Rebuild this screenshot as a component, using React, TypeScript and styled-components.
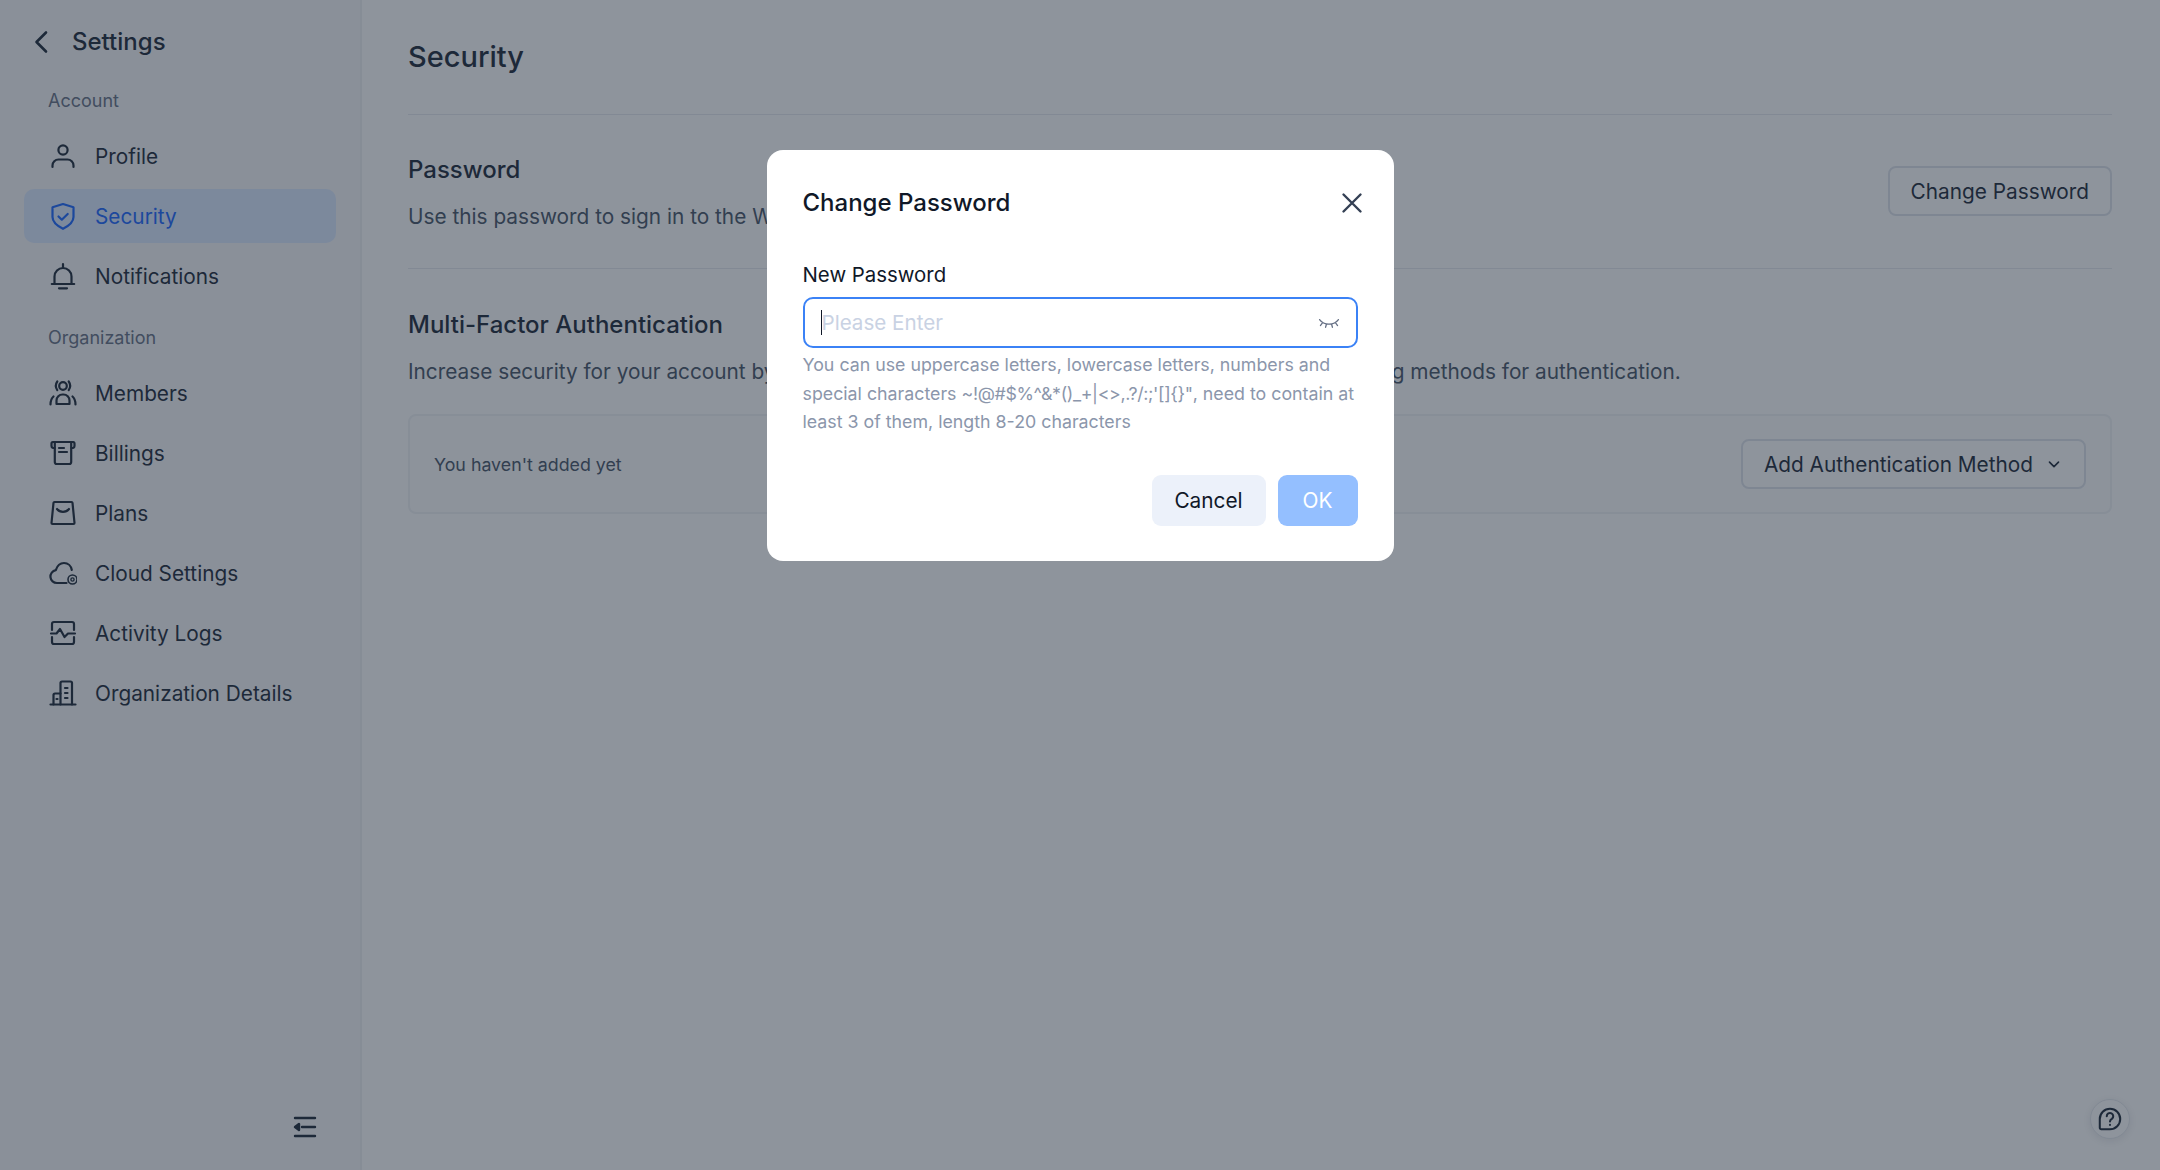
import React from "react";
import styled, { createGlobalStyle } from "styled-components";

const GlobalStyle = createGlobalStyle`
  html, body {
    margin: 0;
    padding: 0;
    height: 100%;
    background: #fff;
  }
  body {
    font-family: Inter, "Noto Sans", "Liberation Sans", sans-serif;
    color: #1d2939;
  }
  * {
    box-sizing: border-box;
  }
`;

const Page = styled.div`
  display: flex;
  height: 1170px;
  overflow: hidden;
`;

const Sidebar = styled.aside`
  width: 362px;
  flex: none;
  display: flex;
  flex-direction: column;
  padding: 0 24px 29px;
  background: #f6f7f9;
  border-right: 2px solid #eef0f3;
`;

const SidebarHeader = styled.div`
  display: flex;
  align-items: center;
  gap: 16px;
  height: 83px;
  padding-left: 4px;
  font-size: 24px;
  font-weight: 500;
`;

const GroupLabel = styled.div<{ $first?: boolean }>`
  height: 30px;
  margin: ${(p) => (p.$first ? "1px" : "12px")} 0 15px;
  padding-left: 24px;
  font-size: 18px;
  line-height: 34px;
  color: #667085;
`;

const NavItem = styled.a<{ $active?: boolean }>`
  display: flex;
  align-items: center;
  gap: 18px;
  height: 54px;
  margin-bottom: 6px;
  padding-left: 25px;
  border-radius: 10px;
  font-size: 20.8px;
  color: ${(p) => (p.$active ? "#1a66ff" : "#1d2939")};
  background: ${(p) => (p.$active ? "#dbe8ff" : "transparent")};
`;

const CollapseButton = styled.button`
  display: flex;
  margin: auto 17px 0 auto;
  padding: 0;
  border: 0;
  background: none;
  color: #1d2939;
`;

const Main = styled.main`
  flex: 1;
  min-width: 0;
  padding: 0 48px 0 46px;
`;

const PageTitle = styled.h1`
  margin: 0;
  height: 115px;
  border-bottom: 1px solid #e7e9ee;
  font-size: 29px;
  font-weight: 500;
  line-height: 114px;
`;

const Section = styled.section<{ $border?: boolean }>`
  padding-top: ${(p) => (p.$border ? "37px" : "38px")};
  height: ${(p) => (p.$border ? "154px" : "auto")};
  border-bottom: ${(p) => (p.$border ? "1px solid #e7e9ee" : "0")};
`;

const SectionRow = styled.div`
  display: flex;
  align-items: flex-start;
  justify-content: space-between;
`;

const SectionTitle = styled.h2`
  margin: 0 0 12px;
  font-size: 24px;
  font-weight: 500;
  line-height: 36px;
`;

const SectionText = styled.p`
  margin: 0;
  font-size: 20.8px;
  line-height: 34px;
  color: #475467;
`;

const OutlineButton = styled.button<{ $offset?: boolean }>`
  display: inline-flex;
  align-items: center;
  gap: 12px;
  height: 50px;
  margin-top: ${(p) => (p.$offset ? "14px" : "0")};
  padding: 0 21px;
  border: 2px solid #dfe3ea;
  border-radius: 8px;
  background: #fff;
  font: inherit;
  font-size: 20.8px;
  color: #1d2939;
`;

const MethodBox = styled.div`
  display: flex;
  align-items: center;
  justify-content: space-between;
  height: 100px;
  margin-top: 25px;
  padding: 0 24px;
  border: 2px solid #f0f2f5;
  border-radius: 8px;
  background: #fcfcfd;
  font-size: 17.8px;
  color: #475467;
`;

const HelpButton = styled.button`
  position: fixed;
  right: 30px;
  bottom: 31px;
  display: flex;
  align-items: center;
  justify-content: center;
  width: 40px;
  height: 40px;
  padding: 0;
  border: 1px solid #e4e7ec;
  border-radius: 50%;
  background: #fff;
  color: #1d2939;
  box-shadow: 0 2px 10px rgba(16, 24, 40, 0.1);
`;

const Overlay = styled.div`
  position: fixed;
  inset: 0;
  display: flex;
  justify-content: center;
  align-items: flex-start;
  padding-top: 150px;
  background: rgba(29, 41, 57, 0.5);
`;

const Modal = styled.div`
  width: 627px;
  height: 411px;
  padding: 0 36px;
  border-radius: 16px;
  background: #fff;
`;

const ModalHeader = styled.div`
  display: flex;
  align-items: center;
  justify-content: space-between;
  height: 105px;
  font-size: 24px;
  font-weight: 500;
  color: #101828;
`;

const CloseButton = styled.button`
  display: flex;
  margin-right: -8px;
  padding: 0;
  border: 0;
  background: none;
  color: #344054;
`;

const FieldLabel = styled.label`
  display: block;
  height: 38px;
  margin-top: 4px;
  font-size: 20.4px;
  line-height: 32px;
  color: #101828;
`;

const InputWrap = styled.div`
  display: flex;
  align-items: center;
  height: 51px;
  padding: 0 15px 0 16px;
  border: 2px solid #3b82f6;
  border-radius: 10px;
`;

const Caret = styled.span`
  flex: none;
  width: 2px;
  height: 25px;
  margin-right: -1px;
  background: #101828;
`;

const PasswordInput = styled.input`
  flex: 1;
  min-width: 0;
  padding: 0;
  border: 0;
  outline: 0;
  font: inherit;
  font-size: 20.6px;
  color: #101828;
  caret-color: transparent;

  &::placeholder {
    color: #c9d2e3;
    opacity: 1;
  }
`;

const EyeIcon = styled.span`
  display: flex;
  color: #667085;
`;

const Hint = styled.p`
  margin: 3px 0 0;
  font-size: 17.8px;
  line-height: 28.5px;
  white-space: nowrap;
  color: #8b96ab;
`;

const HintSymbols = styled.span`
  letter-spacing: -0.35px;
`;

const ModalFooter = styled.div`
  display: flex;
  justify-content: flex-end;
  gap: 12px;
  margin-top: 38px;
`;

const ModalButton = styled.button<{ $primary?: boolean }>`
  height: 51px;
  padding: 0;
  width: ${(p) => (p.$primary ? "80px" : "114px")};
  border: 0;
  border-radius: 9px;
  font: inherit;
  font-size: 20.8px;
  background: ${(p) => (p.$primary ? "#94bfff" : "#ecf1fa")};
  color: ${(p) => (p.$primary ? "#fff" : "#101828")};
`;

const Icon = ({ children, size = 28, sw = 2.2 }: { children: React.ReactNode; size?: number; sw?: number }) => (
  <svg
    width={size}
    height={size}
    viewBox="0 0 28 28"
    fill="none"
    stroke="currentColor"
    strokeWidth={sw}
    strokeLinecap="round"
    strokeLinejoin="round"
  >
    {children}
  </svg>
);

const icons: Record<string, React.ReactNode> = {
  profile: (
    <>
      <circle cx="14" cy="8" r="4.6" />
      <path d="M3.500 25v-1.500a6 6 0 0 1 6-6h9a6 6 0 0 1 6 6V25" />
    </>
  ),
  security: (
    <>
      <path d="M14 2l10.500 3.200V15c0 5.600-5 9-10.500 11.800C8.500 24 3.500 20.600 3.500 15V5.200z" />
      <path d="M9.500 14.500l3.300 3.200 5.900-5.700" />
    </>
  ),
  bell: (
    <>
      <path d="M5.500 22v-7.500a8.500 8.500 0 0 1 17 0V22" />
      <path d="M2.800 22h22.400M10 26.300h8M14 2v3.500" />
    </>
  ),
  members: (
    <>
      <circle cx="14" cy="7" r="3.800" />
      <path d="M8.300 2.500c-1.800 2.600-1.800 6 0 8.600M19.700 2.500c1.800 2.600 1.800 6 0 8.600" />
      <path d="M7.500 25v-3.500a6 6 0 0 1 6-6h1a6 6 0 0 1 6 6V25z" />
      <path d="M1.500 25.500c0-3.500.8-6 3-8M26.500 25.500c0-3.500-.8-6-3-8" />
    </>
  ),
  billing: (
    <>
      <path d="M5.500 9H4a2 2 0 0 1-1.500-2V5A1.800 1.800 0 0 1 4 3h20a1.800 1.800 0 0 1 1.500 2v2A2 2 0 0 1 24 9h-1.500" />
      <path d="M5.800 3v20a2 2 0 0 0 2 2h12.400a2 2 0 0 0 2-2V3" />
      <path d="M10 9h5M10 13h8" />
    </>
  ),
  plans: (
    <>
      <path d="M5.500 3h17a1 1 0 0 1 1 .900L25.500 24a1 1 0 0 1-1 1h-21a1 1 0 0 1-1-1L4.500 3.900a1 1 0 0 1 1-.900z" />
      <path d="M8 10c3 3.800 9 3.800 12 0" />
    </>
  ),
  cloud: (
    <>
      <path d="M17.500 24H8a6.500 6.500 0 0 1-1.200-12.900C8.300 6.500 11.500 4 15 4c4 0 7.200 3 7.800 7" />
      <circle cx="23.500" cy="20.500" r="4.500" strokeWidth="1.600" />
      <circle cx="23.500" cy="20.500" r="1.600" strokeWidth="1.400" />
    </>
  ),
  activity: (
    <>
      <path d="M3 11V5a2 2 0 0 1 2-2h18a2 2 0 0 1 2 2v6" />
      <path d="M3 18v5a2 2 0 0 0 2 2h18a2 2 0 0 0 2-2v-5" />
      <path d="M2 14.500h5.500l3.500-4.500 4.500 8 3.500-3.500H26" />
    </>
  ),
  organization: (
    <>
      <path d="M1.500 25.500h25" />
      <path d="M11.500 25.500V4a1.500 1.500 0 0 1 1.500-1.500h8.500A1.500 1.500 0 0 1 23 4v21.500" />
      <path d="M11.500 14.500H6A1.500 1.500 0 0 0 4.500 16v9.500" />
      <path d="M16 9h2.500M16 14h2.500M16 19h2.500M7.500 20h1" />
    </>
  ),
};

const accountItems = [
  { icon: "profile", label: "Profile" },
  { icon: "security", label: "Security", active: true },
  { icon: "bell", label: "Notifications" },
];

const organizationItems = [
  { icon: "members", label: "Members" },
  { icon: "billing", label: "Billings" },
  { icon: "plans", label: "Plans" },
  { icon: "cloud", label: "Cloud Settings" },
  { icon: "activity", label: "Activity Logs" },
  { icon: "organization", label: "Organization Details" },
];

function NavGroup({ items }: { items: { icon: string; label: string; active?: boolean }[] }) {
  return (
    <>
      {items.map((item) => (
        <NavItem key={item.label} $active={item.active}>
          <Icon>{icons[item.icon]}</Icon>
          {item.label}
        </NavItem>
      ))}
    </>
  );
}

export default function App() {
  return (
    <>
      <GlobalStyle />
      <Page>
        <Sidebar>
          <SidebarHeader>
            <Icon size={28} sw={2.6}>
              <path d="M18 4.500L8.500 14l9.500 9.500" />
            </Icon>
            Settings
          </SidebarHeader>
          <GroupLabel $first>Account</GroupLabel>
          <NavGroup items={accountItems} />
          <GroupLabel>Organization</GroupLabel>
          <NavGroup items={organizationItems} />
          <CollapseButton>
            <Icon size={28} sw={2.4}>
              <path d="M4 5h20M11 14h13M4 23h20" />
              <path d="M8 11v6l-4-3z" fill="currentColor" />
            </Icon>
          </CollapseButton>
        </Sidebar>
        <Main>
          <PageTitle>Security</PageTitle>
          <Section $border>
            <SectionRow>
              <div>
                <SectionTitle>Password</SectionTitle>
                <SectionText>Use this password to sign in to the Workspace.</SectionText>
              </div>
              <OutlineButton $offset>Change Password</OutlineButton>
            </SectionRow>
          </Section>
          <Section>
            <SectionTitle>Multi-Factor Authentication</SectionTitle>
            <SectionText>
              Increase security for your account by configuring any one or more of the following two-factor signing methods for authentication.
            </SectionText>
            <MethodBox>
              You haven't added yet
              <OutlineButton>
                Add Authentication Method
                <Icon size={18} sw={2.6}>
                  <path d="M7 11l7 7 7-7" />
                </Icon>
              </OutlineButton>
            </MethodBox>
          </Section>
        </Main>
        <HelpButton>
          <Icon size={26} sw={2.2}>
            <path d="M14 3a11 11 0 1 1 0 22H4.500a1.500 1.500 0 0 1-1.500-1.500V14A11 11 0 0 1 14 3z" />
            <path d="M10.500 11a3.500 3.500 0 1 1 5.500 2.900c-1.300.8-2 1.500-2 2.800" />
            <path d="M14 20.300v.2" />
          </Icon>
        </HelpButton>
      </Page>
      <Overlay>
        <Modal>
          <ModalHeader>
            Change Password
            <CloseButton>
              <Icon size={28} sw={2.4}>
                <path d="M5.500 5.500l17 17M22.500 5.500l-17 17" />
              </Icon>
            </CloseButton>
          </ModalHeader>
          <FieldLabel htmlFor="new-password">New Password</FieldLabel>
          <InputWrap>
            <Caret />
            <PasswordInput id="new-password" type="password" placeholder="Please Enter" />
            <EyeIcon>
              <Icon size={24} sw={1.5}>
                <path d="M3 10c5 7 17 7 22 0M6.500 13.500L4 17M11 15.500L10 19M17 15.500l1 3.500M21.500 13.500L24 17" />
              </Icon>
            </EyeIcon>
          </InputWrap>
          <Hint>
            You can use uppercase letters, lowercase letters, numbers and
            <br />
            special characters <HintSymbols>{"~!@#$%^&*()_+|<>,.?/:;'[]{}\""}</HintSymbols>, need to contain at
            <br />
            least 3 of them, length 8-20 characters
          </Hint>
          <ModalFooter>
            <ModalButton>Cancel</ModalButton>
            <ModalButton $primary>OK</ModalButton>
          </ModalFooter>
        </Modal>
      </Overlay>
    </>
  );
}
